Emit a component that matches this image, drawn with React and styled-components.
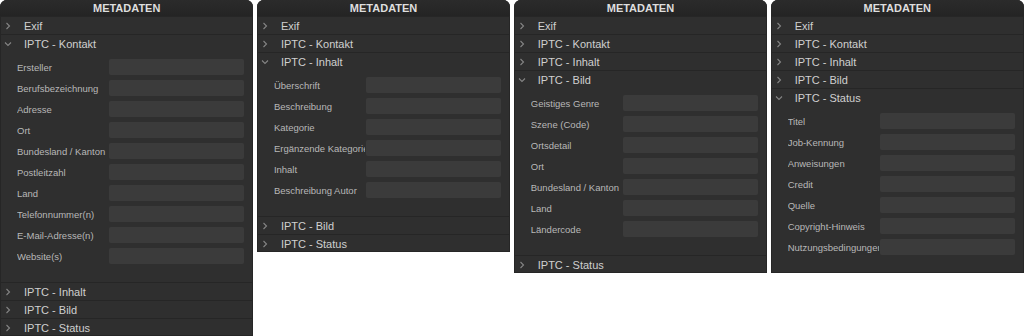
import React from "react";
import styled, { createGlobalStyle } from "styled-components";

const GlobalStyle = createGlobalStyle`
    html, body {
        margin: 0;
        padding: 0;
        background: #ffffff;
        font-family: "Liberation Sans", Arial, sans-serif;
    }
`;

const SECTIONS = {
    exif: { title: "Exif", fields: [] },
    kontakt: {
        title: "IPTC - Kontakt",
        fields: [
            "Ersteller",
            "Berufsbezeichnung",
            "Adresse",
            "Ort",
            "Bundesland / Kanton",
            "Postleitzahl",
            "Land",
            "Telefonnummer(n)",
            "E-Mail-Adresse(n)",
            "Website(s)",
        ],
    },
    inhalt: {
        title: "IPTC - Inhalt",
        fields: [
            "Überschrift",
            "Beschreibung",
            "Kategorie",
            "Ergänzende Kategorien",
            "Inhalt",
            "Beschreibung Autor",
        ],
    },
    bild: {
        title: "IPTC - Bild",
        fields: [
            "Geistiges Genre",
            "Szene (Code)",
            "Ortsdetail",
            "Ort",
            "Bundesland / Kanton",
            "Land",
            "Ländercode",
        ],
    },
    status: {
        title: "IPTC - Status",
        fields: [
            "Titel",
            "Job-Kennung",
            "Anweisungen",
            "Credit",
            "Quelle",
            "Copyright-Hinweis",
            "Nutzungsbedingungen",
        ],
    },
};

const ORDER = ["exif", "kontakt", "inhalt", "bild", "status"];
const OPEN_PER_PANEL = ["kontakt", "inhalt", "bild", "status"];

const Chevron = ({ open }) => (
    <ChevronBox>
        {open ? (
            <svg width="8" height="8" viewBox="0 0 8 8" fill="none">
                <path d="M1 2.5 L4 5.5 L7 2.5" stroke="#858585" strokeWidth="1.1" />
            </svg>
        ) : (
            <svg width="8" height="8" viewBox="0 0 8 8" fill="none">
                <path d="M2.5 1 L5.5 4 L2.5 7" stroke="#858585" strokeWidth="1.1" />
            </svg>
        )}
    </ChevronBox>
);

const Section = ({ id, open }) => {
    const section = SECTIONS[id];
    return (
        <SectionWrap>
            <SectionHead>
                <Chevron open={open} />
                <SectionTitle>{section.title}</SectionTitle>
            </SectionHead>
            {open && (
                <Fields>
                    {section.fields.map((label) => (
                        <FieldRow key={label}>
                            <Label>{label}</Label>
                            <Input />
                        </FieldRow>
                    ))}
                </Fields>
            )}
        </SectionWrap>
    );
};

const Panel = ({ openId }) => (
    <PanelBox>
        <Header>METADATEN</Header>
        {ORDER.map((id) => (
            <Section key={id} id={id} open={id === openId} />
        ))}
    </PanelBox>
);

const App = () => (
    <>
        <GlobalStyle />
        <Page>
            {OPEN_PER_PANEL.map((id) => (
                <Panel key={id} openId={id} />
            ))}
        </Page>
    </>
);

export default App;

const Page = styled.div`
    display: flex;
    align-items: flex-start;
    gap: 3.5px;
    width: 1024px;
    height: 336px;
    overflow: hidden;
`;

const PanelBox = styled.div`
    flex: 1;
    display: flex;
    flex-direction: column;
    background: #2f2f2f;
    border-radius: 7px 7px 0 0;
    overflow: hidden;
    box-shadow: inset 0 0 0 1px #262626;
`;

const Header = styled.div`
    height: 16px;
    line-height: 17px;
    text-align: center;
    font-size: 11px;
    font-weight: bold;
    color: #dedede;
    background: linear-gradient(#2b2b2b, #242424);
`;

const SectionWrap = styled.div`
    display: flex;
    flex-direction: column;
    border-top: 1px solid #262626;
`;

const SectionHead = styled.div`
    height: 17px;
    display: flex;
    align-items: center;
`;

const ChevronBox = styled.span`
    width: 24px;
    padding-left: 4px;
    box-sizing: border-box;
    display: flex;
    align-items: center;
`;

const SectionTitle = styled.span`
    font-size: 11px;
    color: #d0d0d0;
`;

const Fields = styled.div`
    display: flex;
    flex-direction: column;
    gap: 5px;
    padding: 7px 9px 18px 17px;
`;

const FieldRow = styled.div`
    display: flex;
    align-items: center;
    height: 16px;
`;

const Label = styled.span`
    width: 91px;
    margin-right: 1px;
    flex-shrink: 0;
    font-size: 9.5px;
    color: #b8b8b8;
    white-space: nowrap;
    overflow: hidden;
`;

const Input = styled.div`
    flex: 1;
    height: 16px;
    background: #3b3b3b;
    border-radius: 2px;
`;
